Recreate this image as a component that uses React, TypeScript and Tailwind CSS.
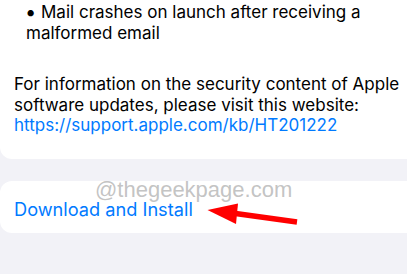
export default function App() {
  return (
    <div
      className="relative w-[407px] h-[274px] overflow-hidden bg-[#f2f2f7] text-black"
      style={{ fontFamily: 'Inter, "Liberation Sans", sans-serif' }}
    >
      {/* release notes card */}
      <div className="-mr-6 rounded-b-[12px] bg-white pl-[14px] pt-[2px] pb-[23px]">
        <div className="flex text-[17px] leading-[21px]">
          <span className="w-[27px] shrink-0 pl-[11px] text-[20px]">•</span>
          <span>Mail crashes on launch after receiving a</span>
        </div>
        <div className="pl-[12px] text-[17px] leading-[21px]">malformed email</div>

        <p className="mt-[30px] text-[17px] leading-[20.5px]">
          For information on the security content of Apple
          <br />
          software updates, please visit this website:
          <br />
          <span className="text-[#007aff]">https://support.apple.com/kb/HT201222</span>
        </p>
      </div>

      {/* action card */}
      <div className="-mr-6 mt-[22px] rounded-[12px] bg-white pl-[14px] pt-[16px] pb-[12px]">
        <div className="text-[18.2px] leading-[24px] text-[#007aff]">Download and Install</div>
      </div>

      {/* watermark */}
      <div
        className="absolute left-[95px] top-[179px] text-[22px] leading-[21px] text-[#b4b4b4]/80"
        style={{ fontFamily: '"Liberation Sans", Arial, sans-serif' }}
      >
        @thegeekpage.com
      </div>

      {/* annotation arrow */}
      <svg className="absolute inset-0" width="407" height="274" viewBox="0 0 407 274">
        <line x1="232" y1="213" x2="297" y2="222" stroke="#ff0000" strokeWidth="5.5" />
        <polygon points="207.5,210 238,203.5 236,224" fill="#ff0000" />
      </svg>
    </div>
  );
}
